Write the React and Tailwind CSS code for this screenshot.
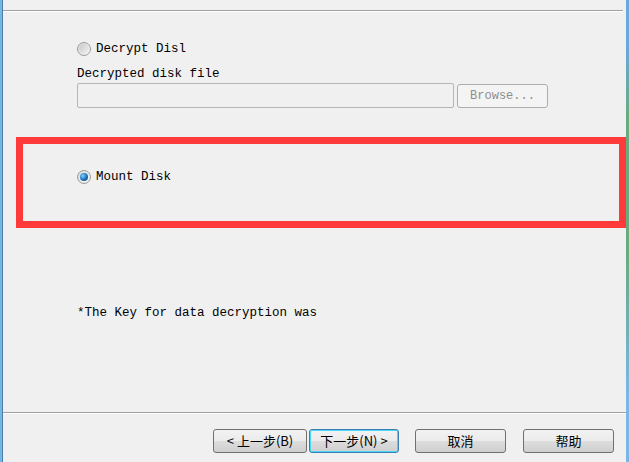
import React from "react";

const mono = { fontFamily: '"Liberation Mono", "DejaVu Sans Mono", monospace' };

function Radio({ checked }) {
  return (
    <div className="w-[14px] h-[14px] rounded-full border border-[#9a9a9a] bg-[linear-gradient(135deg,#d8d8d8,#f8f8f8)] flex items-center justify-center shrink-0">
      {checked ? (
        <div className="w-[8px] h-[8px] rounded-full bg-[radial-gradient(circle_at_35%_35%,#7fd0ff,#1a6fb8_55%,#0b3f78)]" />
      ) : (
        <div className="w-[10px] h-[10px] rounded-full bg-[linear-gradient(135deg,#c9c9c9,#f2f2f2)]" />
      )}
    </div>
  );
}

function Btn({ children, w, focused }) {
  return (
    <div
      className={`h-[24px] ${w} rounded-[3px] border ${focused ? "border-[#3c7fb1] shadow-[inset_0_0_0_1px_#48d7fb]" : "border-[#707070]"} bg-[linear-gradient(#f2f2f2,#ebebeb_50%,#dddddd_50%,#cfcfcf)] flex items-center justify-center text-[13px] text-black`}
      style={{ fontFamily: '"Noto Sans CJK SC", "Liberation Mono", sans-serif' }}
    >
      {children}
    </div>
  );
}

export default function App() {
  return (
    <div className="w-[629px] h-[462px] bg-[#f0f0f0] flex relative overflow-hidden text-black">
      <div className="w-[2px] bg-[#78b6e4] shrink-0" />
      <div className="w-[1px] bg-[#4a7fa8] shrink-0" />
      <div className="flex-1 flex flex-col">
        <div className="h-[10px]" />
        <div className="h-[1px] bg-[#a0a0a0] mr-[3px]" />
        <div className="h-[1px] bg-white mr-[3px]" />
        <div className="pl-[74px] flex flex-col text-[12.5px] leading-[16px]" style={mono}>
          <div className="h-[29px]" />
          <div className="flex items-center gap-[5px] h-[16px]">
            <Radio />
            <span>Decrypt Disl</span>
          </div>
          <div className="h-[9px]" />
          <div className="h-[16px]">Decrypted disk file</div>
          <div className="h-[1px]" />
          <div className="flex items-center">
            <div className="w-[377px] h-[25px] border border-[#b5b5b5] rounded-[2px] bg-[#f0f0f0]" />
            <div className="w-[3px]" />
            <div className="w-[91px] h-[24px] border border-[#adadad] rounded-[3px] bg-[#f4f4f4] flex items-center justify-center text-[#8d8d8d] text-[12px]">
              Browse...
            </div>
          </div>
          <div className="h-[61px]" />
          <div className="flex items-center gap-[5px] h-[16px]">
            <Radio checked />
            <span>Mount Disk</span>
          </div>
          <div className="h-[120px]" />
          <div className="h-[16px]">*The Key for data decryption was</div>
        </div>
        <div className="flex-1" />
        <div className="h-[1px] bg-[#a0a0a0]" />
        <div className="h-[1px] bg-white" />
        <div className="h-[15px]" />
        <div className="flex items-start pl-[210px]">
          <Btn w="w-[94px]">&lt; 上一步(B)</Btn>
          <div className="w-[2px]" />
          <Btn w="w-[90px]" focused>下一步(N) &gt;</Btn>
          <div className="w-[16px]" />
          <Btn w="w-[91px]">取消</Btn>
          <div className="w-[17px]" />
          <Btn w="w-[91px]">帮助</Btn>
        </div>
        <div className="h-[9px]" />
      </div>
      <div className="w-[3px] shrink-0 bg-[linear-gradient(#6aa8dc_0%,#6aa8dc_10%,#6aaa7e_25%,#6aaa7e_55%,#7bb6e4_85%,#7bb6e4_100%)]" />
      <div className="absolute left-[16px] top-[137px] w-[610px] h-[91px] border-[7px] border-[#ff3a3a]" />
    </div>
  );
}
